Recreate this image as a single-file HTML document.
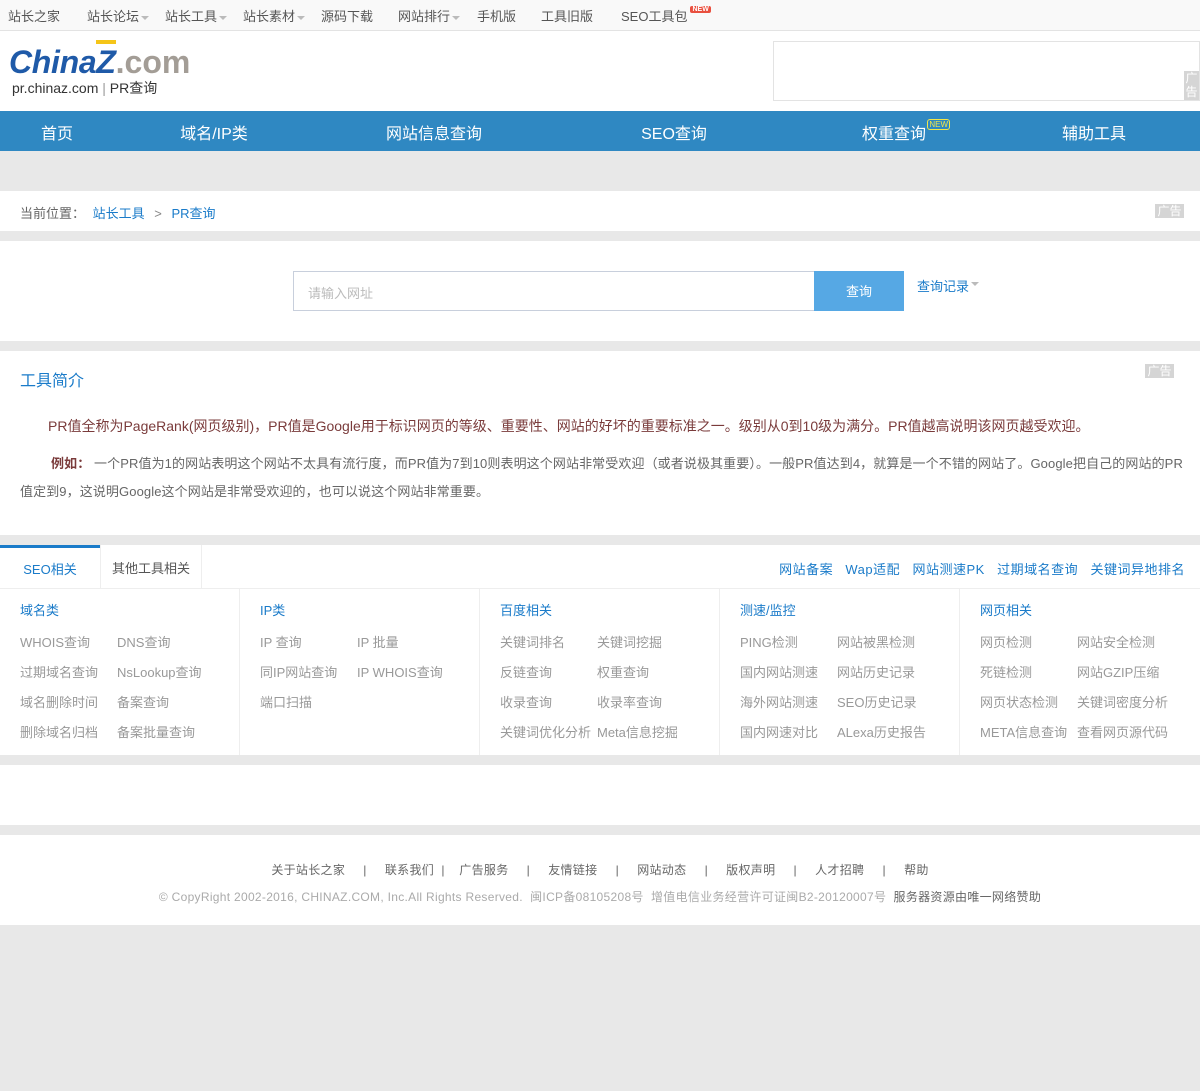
<!DOCTYPE html>
<html><head><meta charset="utf-8"><style>
*{margin:0;padding:0;box-sizing:border-box}
body{width:1200px;height:1091px;background:#e8e8e8;font-family:"Liberation Sans","Noto Sans CJK SC",sans-serif;font-size:13px;color:#666;position:relative;overflow:hidden}
.abs{position:absolute}
.w{position:absolute;left:0;width:1200px;background:#fff}
a{text-decoration:none}
.tri{display:inline-block;width:0;height:0;border-left:4px solid transparent;border-right:4px solid transparent;border-top:4px solid #bbb;vertical-align:middle;margin-left:2px}
.top span{position:absolute;top:6px;font-size:13px;color:#555}
.nav span{position:absolute;top:11px;font-size:16px;color:#fff;transform:translateX(-50%);white-space:nowrap}
.col{position:absolute;top:589px;width:240px;height:166px;border-right:1px solid #eee}
.col h4{position:absolute;left:20px;top:11px;font-size:13px;font-weight:normal;color:#1a7bc9}
.col i{position:absolute;font-style:normal;font-size:13px;color:#999;white-space:nowrap}
.ad{position:absolute;background:#d5d5d5;color:#fff;font-size:12px;line-height:14px}
</style></head><body>
<div class="w" style="top:0;height:31px;background:#f9f9f9;border-bottom:1px solid #e3e3e3"></div>
<div class="top">
<span style="left:8px">站长之家</span>
<span style="left:87px">站长论坛<i class="tri"></i></span>
<span style="left:165px">站长工具<i class="tri"></i></span>
<span style="left:243px">站长素材<i class="tri"></i></span>
<span style="left:321px">源码下载</span>
<span style="left:398px">网站排行<i class="tri"></i></span>
<span style="left:477px">手机版</span>
<span style="left:541px">工具旧版</span>
<span style="left:621px">SEO工具包<b style="font-size:7px;background:#e9503f;color:#fff;padding:0 2px;vertical-align:top;margin-left:3px;border-radius:2px">NEW</b></span>
</div>
<div class="w" style="top:31px;height:80px"></div>
<div class="abs" style="left:9px;top:43px;font-size:32px;font-weight:bold;font-style:italic;color:#1f5aa8;letter-spacing:-0.3px;line-height:38px">China<span style="color:#1f5aa8;border-top:4px solid #f5c518">Z</span><span style="color:#a39d96;font-style:normal;letter-spacing:0">.com</span></div>
<div class="abs" style="left:12px;top:78px;font-size:14px;color:#333">pr.chinaz.com <span style="color:#999">|</span> PR查询</div>
<div class="abs" style="left:773px;top:41px;width:427px;height:60px;border:1px solid #e3e3e3;background:#fff"></div>
<div class="ad" style="left:1184px;top:71px;width:15px;height:29px;text-align:center">广<br>告</div>
<div class="w" style="top:111px;height:40px;background:#2f88c2"></div>
<div class="nav">
<span style="left:57px;top:120px">首页</span>
<span style="left:214px;top:120px">域名/IP类</span>
<span style="left:434px;top:120px">网站信息查询</span>
<span style="left:674px;top:120px">SEO查询</span>
<span style="left:894px;top:120px">权重查询<b style="position:absolute;top:-1px;right:-24px;font-size:8px;color:#f2e64a;border:1px solid #f2e64a;border-radius:3px;padding:0 1px;line-height:9px;font-weight:normal">NEW</b></span>
<span style="left:1094px;top:120px">辅助工具</span>
</div>
<div class="w" style="top:191px;height:40px"></div>
<div class="abs" style="left:20px;top:203px;color:#666">当前位置： <a style="color:#1a7bc9;margin-left:4px">站长工具</a> <span style="margin:0 6px;color:#888">&gt;</span> <a style="color:#1a7bc9">PR查询</a></div>
<div class="ad" style="left:1155px;top:204px;width:29px;height:14px;text-align:center">广告</div>
<div class="w" style="top:241px;height:100px"></div>
<div class="abs" style="left:293px;top:271px;width:522px;height:40px;border:1px solid #c8cfdc;border-right:none;padding:11px 14px;color:#bbb">请输入网址</div>
<div class="abs" style="left:814px;top:271px;width:90px;height:40px;background:#56a8e4;color:#fff;text-align:center;line-height:42px">查询</div>
<div class="abs" style="left:917px;top:276px;color:#1a7bc9">查询记录<i class="tri" style="margin-top:-8px"></i></div>
<div class="w" style="top:351px;height:184px"></div>
<div class="abs" style="left:20px;top:367px;font-size:16px;color:#1a7bc9">工具简介</div>
<div class="ad" style="left:1145px;top:364px;width:29px;height:14px;text-align:center">广告</div>
<div class="abs" style="left:48px;top:416px;font-size:14px;color:#7a3b3b;white-space:nowrap;letter-spacing:0">PR值全称为PageRank(网页级别)，PR值是Google用于标识网页的等级、重要性、网站的好坏的重要标准之一。级别从0到10级为满分。PR值越高说明该网页越受欢迎。</div>
<div class="abs" style="left:20px;top:450px;width:1170px;font-size:13px;line-height:28px;color:#666;text-indent:31px;letter-spacing:0.1px"><b style="color:#7a3b3b">例如：</b> 一个PR值为1的网站表明这个网站不太具有流行度，而PR值为7到10则表明这个网站非常受欢迎（或者说极其重要）。一般PR值达到4，就算是一个不错的网站了。Google把自己的网站的PR<br>值定到9，这说明Google这个网站是非常受欢迎的，也可以说这个网站非常重要。</div>
<div class="w" style="top:545px;height:210px"></div>
<div class="abs" style="left:0;top:545px;width:100px;height:44px;border-top:3px solid #1a7bc9;color:#1a7bc9;text-align:center;line-height:44px">SEO相关</div>
<div class="abs" style="left:100px;top:545px;width:102px;height:44px;border-left:1px solid #eee;border-right:1px solid #eee;color:#555;text-align:center;line-height:48px">其他工具相关</div>
<div class="abs" style="left:0;top:588px;width:1200px;border-top:1px solid #eee"></div>
<div class="abs" style="right:15px;top:559px;color:#1a7bc9;white-space:nowrap;letter-spacing:0.5px">网站备案&nbsp;&nbsp;&nbsp;Wap适配&nbsp;&nbsp;&nbsp;网站测速PK&nbsp;&nbsp;&nbsp;过期域名查询&nbsp;&nbsp;&nbsp;关键词异地排名</div>
<div class="col" style="left:0"><h4>域名类</h4><i style="left:20px;top:43px">WHOIS查询</i><i style="left:117px;top:43px">DNS查询</i><i style="left:20px;top:73px">过期域名查询</i><i style="left:117px;top:73px">NsLookup查询</i><i style="left:20px;top:103px">域名删除时间</i><i style="left:117px;top:103px">备案查询</i><i style="left:20px;top:133px">删除域名归档</i><i style="left:117px;top:133px">备案批量查询</i></div>
<div class="col" style="left:240px"><h4>IP类</h4><i style="left:20px;top:43px">IP 查询</i><i style="left:117px;top:43px">IP 批量</i><i style="left:20px;top:73px">同IP网站查询</i><i style="left:117px;top:73px">IP WHOIS查询</i><i style="left:20px;top:103px">端口扫描</i></div>
<div class="col" style="left:480px"><h4>百度相关</h4><i style="left:20px;top:43px">关键词排名</i><i style="left:117px;top:43px">关键词挖掘</i><i style="left:20px;top:73px">反链查询</i><i style="left:117px;top:73px">权重查询</i><i style="left:20px;top:103px">收录查询</i><i style="left:117px;top:103px">收录率查询</i><i style="left:20px;top:133px">关键词优化分析</i><i style="left:117px;top:133px">Meta信息挖掘</i></div>
<div class="col" style="left:720px"><h4>测速/监控</h4><i style="left:20px;top:43px">PING检测</i><i style="left:117px;top:43px">网站被黑检测</i><i style="left:20px;top:73px">国内网站测速</i><i style="left:117px;top:73px">网站历史记录</i><i style="left:20px;top:103px">海外网站测速</i><i style="left:117px;top:103px">SEO历史记录</i><i style="left:20px;top:133px">国内网速对比</i><i style="left:117px;top:133px">ALexa历史报告</i></div>
<div class="col" style="left:960px;border-right:none"><h4>网页相关</h4><i style="left:20px;top:43px">网页检测</i><i style="left:117px;top:43px">网站安全检测</i><i style="left:20px;top:73px">死链检测</i><i style="left:117px;top:73px">网站GZIP压缩</i><i style="left:20px;top:103px">网页状态检测</i><i style="left:117px;top:103px">关键词密度分析</i><i style="left:20px;top:133px">META信息查询</i><i style="left:117px;top:133px">查看网页源代码</i></div>
<div class="w" style="top:765px;height:60px"></div>
<div class="w" style="top:835px;height:90px"></div>
<div class="abs" style="left:0;width:1200px;top:861px;text-align:center;font-size:12px;color:#666;letter-spacing:0.3px;white-space:nowrap">关于站长之家 &nbsp;&nbsp;&nbsp;&nbsp;|&nbsp;&nbsp;&nbsp;&nbsp; 联系我们 &nbsp;|&nbsp;&nbsp;&nbsp; 广告服务 &nbsp;&nbsp;&nbsp;&nbsp;|&nbsp;&nbsp;&nbsp;&nbsp; 友情链接 &nbsp;&nbsp;&nbsp;&nbsp;|&nbsp;&nbsp;&nbsp;&nbsp; 网站动态 &nbsp;&nbsp;&nbsp;&nbsp;|&nbsp;&nbsp;&nbsp;&nbsp; 版权声明 &nbsp;&nbsp;&nbsp;&nbsp;|&nbsp;&nbsp;&nbsp;&nbsp; 人才招聘 &nbsp;&nbsp;&nbsp;&nbsp;|&nbsp;&nbsp;&nbsp;&nbsp; 帮助</div>
<div class="abs" style="left:0;width:1200px;top:888px;text-align:center;font-size:12px;color:#aaa;letter-spacing:0.3px;white-space:nowrap">© CopyRight 2002-2016, CHINAZ.COM, Inc.All Rights Reserved. &nbsp;闽ICP备08105208号 &nbsp;增值电信业务经营许可证闽B2-20120007号 &nbsp;<span style="color:#666">服务器资源由唯一网络赞助</span></div>
</body></html>
